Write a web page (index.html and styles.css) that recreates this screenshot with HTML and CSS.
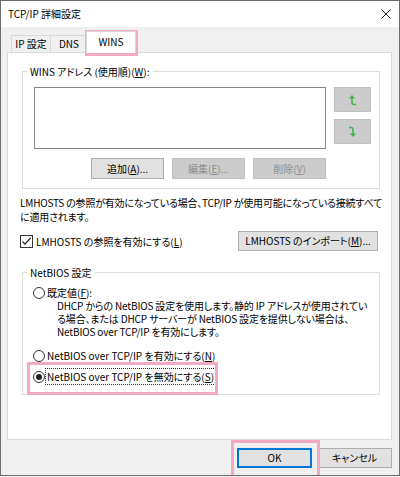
FILE: index.html
```html
<!DOCTYPE html>
<html>
<head>
    <title>TCP/IP 詳細設定</title>
    <link rel="stylesheet" href="styles.css">
</head>
<body>

    <div class="window">
        <div class="titlebar">
            <span class="title">TCP/IP 詳細設定</span>
            <svg class="close" width="10" height="10" viewBox="0 0 10 10">
                <path d="M0.5 0.5L9.5 9.5M9.5 0.5L0.5 9.5" stroke="#222" stroke-width="1"/>
            </svg>
        </div>

        <div class="content">
            <div class="tabs">
                <div class="tab">IP 設定</div>
                <div class="tab">DNS</div>
                <div class="tab active">WINS</div>
            </div>

            <div class="panel">
                <fieldset class="group wins">
                    <legend>WINS アドレス (使用順)(<u>W</u>):</legend>
                    <div class="wins-body">
                        <div class="wins-left">
                            <div class="listbox"></div>
                            <div class="btn-row">
                                <button class="btn small">追加(<u>A</u>)...</button>
                                <button class="btn small" disabled>編集(<u>E</u>)...</button>
                                <button class="btn small" disabled>削除(<u>V</u>)</button>
                            </div>
                        </div>
                        <div class="arrows">
                            <button class="btn arrow" disabled>
                                <svg width="9" height="12" viewBox="0 0 9 12">
                                    <path d="M4 3.5V8.5Q4 10.5 6 10.5H8" fill="none" stroke="#3fb34f" stroke-width="1.6"/>
                                    <path d="M0.8 4.6L4 1L7.2 4.6Z" fill="#3fb34f"/>
                                </svg>
                            </button>
                            <button class="btn arrow" disabled>
                                <svg width="9" height="12" viewBox="0 0 9 12">
                                    <path d="M1 1.5H3Q5 1.5 5 3.5V8.5" fill="none" stroke="#3fb34f" stroke-width="1.6"/>
                                    <path d="M1.8 7.4L5 11L8.2 7.4Z" fill="#3fb34f"/>
                                </svg>
                            </button>
                        </div>
                    </div>
                </fieldset>

                <p class="note">LMHOSTS の参照が有効になっている場合、TCP/IP が使用可能になっている接続すべて<br>に適用されます。</p>

                <div class="lmhosts-row">
                    <label class="check">
                        <span class="checkbox">
                            <svg width="11" height="11" viewBox="0 0 11 11">
                                <path d="M1.5 5.5L4 8.2L9.5 2" fill="none" stroke="#222" stroke-width="1.2"/>
                            </svg>
                        </span>
                        <span>LMHOSTS の参照を有効にする(<u>L</u>)</span>
                    </label>
                    <button class="btn import">LMHOSTS のインポート(<u>M</u>)...</button>
                </div>

                <fieldset class="group netbios">
                    <legend>NetBIOS 設定</legend>
                    <div class="netbios-body">
                        <div class="radio-row">
                            <span class="radio"></span>
                            <span>既定値(<u>F</u>):</span>
                        </div>
                        <div class="desc">
                            <div>DHCP からの NetBIOS 設定を使用します。静的 IP アドレスが使用されてい</div>
                            <div>る場合、または DHCP サーバーが NetBIOS 設定を提供しない場合は、</div>
                            <div>NetBIOS over TCP/IP を有効にします。</div>
                        </div>
                        <div class="radio-row second">
                            <span class="radio"></span>
                            <span>NetBIOS over TCP/IP を有効にする(<u>N</u>)</span>
                        </div>
                        <div class="radio-row third">
                            <span class="radio checked"></span>
                            <span class="focus">NetBIOS over TCP/IP を無効にする(<u>S</u>)</span>
                        </div>
                    </div>
                </fieldset>
            </div>

            <div class="footer">
                <button class="btn default">OK</button>
                <button class="btn">キャンセル</button>
            </div>
        </div>

        <!-- pink annotation boxes -->
        <div class="mark mark-tab"></div>
        <div class="mark mark-radio"></div>
        <div class="mark mark-ok"></div>
    </div>

</body>
</html>
```

FILE: styles.css
```css
body {
    margin: 0;
    padding: 0;
    background-color: #f0f0f0;
    font-family: "Noto Sans CJK JP", sans-serif;
    font-size: 10px;
    font-feature-settings: "palt";
    color: #000;
}

.window {
    position: relative;
    width: 400px;
    height: 476px;
    box-sizing: border-box;
    border: 1px solid #6b6b6b;
    background-color: #f0f0f0;
    overflow: hidden;
}

.titlebar {
    height: 26px;
    background-color: #fff;
    display: flex;
    align-items: center;
    justify-content: space-between;
    padding: 0 8px 0 7px;
}

.title {
    line-height: 14px;
}

.close {
    margin-top: -1px;
}

.content {
    padding: 4px 7px 0 6px;
}

/* tabs */
.tabs {
    display: flex;
    align-items: flex-end;
    height: 21px;
    margin-left: 4px;
}

.tab {
    box-sizing: border-box;
    height: 17px;
    line-height: 15px;
    text-align: center;
    border: 1px solid #d9d9d9;
    border-bottom: none;
    background-color: #f0f0f0;
}

.tab:nth-child(1) {
    width: 40px;
}

.tab:nth-child(2) {
    width: 38px;
    margin-left: -1px;
}

.tab.active {
    position: relative;
    z-index: 1;
    width: 50px;
    height: 22px;
    line-height: 20px;
    margin-left: -2px;
    margin-bottom: -1px;
    background-color: #fff;
}

.panel {
    box-sizing: border-box;
    height: 388px;
    border: 1px solid #d9d9d9;
    background-color: #fff;
    padding-top: 12px;
}

/* group boxes */
.group {
    border: 1px solid #dcdcdc;
    margin: 0 11px 0 14px;
    padding: 0;
    min-width: 0;
}

.group legend {
    margin-left: 4px;
    padding: 0 3px;
    line-height: 13px;
}

.wins-body {
    display: flex;
    gap: 8px;
    padding: 9px 0 9px 11px;
}

.wins-left {
    width: 292px;
}

.listbox {
    box-sizing: border-box;
    height: 62px;
    border: 1px solid #828790;
    background-color: #fff;
}

.btn-row {
    display: flex;
    justify-content: flex-end;
    gap: 8px;
    margin-top: 9px;
}

.arrows {
    display: flex;
    flex-direction: column;
    gap: 7px;
}

/* buttons */
.btn {
    box-sizing: border-box;
    font-family: inherit;
    font-size: 10px;
    font-feature-settings: "palt";
    color: #000;
    background-color: #e1e1e1;
    border: 1px solid #adadad;
    border-radius: 0;
    margin: 0;
    padding: 0;
    height: 20px;
    line-height: 16px;
}

.btn:disabled {
    background-color: #cccccc;
    border-color: #bfbfbf;
    color: #8d8d8d;
}

.btn.small {
    width: 73px;
    height: 21px;
}

.btn.arrow {
    width: 37px;
    height: 25px;
    display: flex;
    align-items: center;
    justify-content: center;
}

.btn.import {
    width: 140px;
}

.btn.default {
    border: 2px solid #0078d7;
}

.footer .btn {
    width: 75px;
}

.footer {
    display: flex;
    justify-content: flex-end;
    gap: 5px;
    padding-top: 8px;
}

/* lmhosts */
.note {
    margin: 7px 0 0 12px;
    line-height: 14px;
    white-space: nowrap;
    letter-spacing: -0.2px;
}

.lmhosts-row {
    display: flex;
    justify-content: space-between;
    align-items: center;
    margin: 7px 13px 0 12px;
}

.check {
    display: flex;
    align-items: center;
    gap: 3px;
}

.checkbox {
    box-sizing: border-box;
    width: 13px;
    height: 13px;
    border: 1px solid #333;
    background-color: #fff;
    display: flex;
    align-items: center;
    justify-content: center;
}

/* netbios */
.netbios {
    margin-top: 15px;
}

.netbios-body {
    padding: 7px 0 11px 10px;
}

.radio-row {
    display: flex;
    align-items: center;
    gap: 2px;
    height: 13px;
    line-height: 13px;
}

.radio-row.second {
    margin-top: 11px;
}

.radio-row.third {
    margin-top: 8px;
}

.radio {
    box-sizing: border-box;
    width: 12px;
    height: 12px;
    border: 1px solid #333;
    border-radius: 50%;
    background-color: #fff;
    display: flex;
    align-items: center;
    justify-content: center;
}

.radio.checked::after {
    content: "";
    width: 6px;
    height: 6px;
    border-radius: 50%;
    background-color: #222;
}

.focus {
    outline: 1px dotted #333;
    outline-offset: 1px;
}

.desc {
    margin: 0 0 0 24px;
    line-height: 13px;
    white-space: nowrap;
    letter-spacing: -0.15px;
}

/* annotation marks */
.mark {
    position: absolute;
    box-sizing: border-box;
    border: 3px solid #f3a9c5;
}

.mark-tab {
    left: 84px;
    top: 29px;
    width: 53px;
    height: 26px;
}

.mark-radio {
    left: 26px;
    top: 361px;
    width: 191px;
    height: 33px;
}

.mark-ok {
    left: 230px;
    top: 439px;
    width: 89px;
    height: 44px;
}
```
